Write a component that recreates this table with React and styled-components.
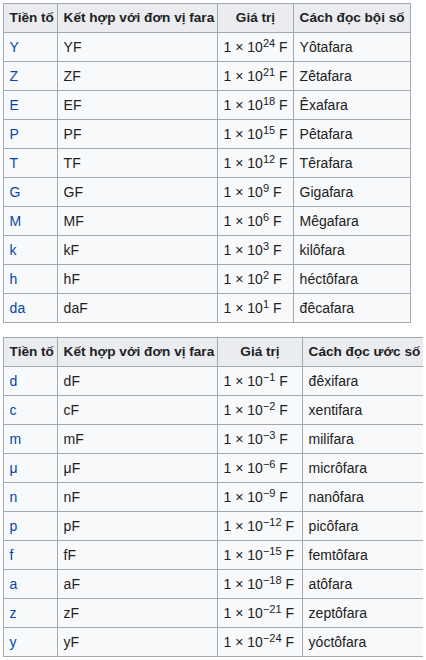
import React from "react"
import styled, { createGlobalStyle } from "styled-components"

const GlobalStyle = createGlobalStyle`
  body {
    margin: 3px;
    background: #ffffff;
    font-family: "Liberation Sans", Arial, sans-serif;
    font-size: 14px;
    color: #202122;
  }
`

const Table = styled.table`
  border-collapse: collapse;
  background: #f8f9fa;
  border: 1px solid #a2a9b1;
  color: #202122;
  font-family: "Liberation Sans", Arial, sans-serif;
  font-size: 14px;
  margin-bottom: 14px;
  table-layout: fixed;
  width: ${(p) => p.$width}px;
`

const Th = styled.th`
  box-sizing: border-box;
  background: #eaecf0;
  border: 1px solid #a2a9b1;
  padding: 2.8px 5.6px;
  line-height: 22.4px;
  font-size: 13.6px;
  text-align: center;
  font-weight: bold;
  white-space: nowrap;
  width: ${(p) => p.$w}px;
`

const Td = styled.td`
  border: 1px solid #a2a9b1;
  padding: 2.8px 5.6px;
  line-height: 22.4px;
  text-align: left;
  white-space: nowrap;
`

const PrefixLink = styled.a`
  color: #0645ad;
  text-decoration: none;
`

const Sup = styled.sup`
  font-size: 11px;
  line-height: 1;
  vertical-align: 5px;
`

const big = [
  ["Y", "24", "Yôtafara"],
  ["Z", "21", "Zêtafara"],
  ["E", "18", "Êxafara"],
  ["P", "15", "Pêtafara"],
  ["T", "12", "Têrafara"],
  ["G", "9", "Gigafara"],
  ["M", "6", "Mêgafara"],
  ["k", "3", "kilôfara"],
  ["h", "2", "héctôfara"],
  ["da", "1", "đêcafara"],
]

const small = [
  ["d", "−1", "đêxifara"],
  ["c", "−2", "xentifara"],
  ["m", "−3", "milifara"],
  ["μ", "−6", "micrôfara"],
  ["n", "−9", "nanôfara"],
  ["p", "−12", "picôfara"],
  ["f", "−15", "femtôfara"],
  ["a", "−18", "atôfara"],
  ["z", "−21", "zeptôfara"],
  ["y", "−24", "yóctôfara"],
]

const PrefixTable = ({ rows, title, widths, total }) => (
  <Table $width={total}>
    <thead>
      <tr>
        <Th $w={widths[0]}>Tiền tố</Th>
        <Th $w={widths[1]}>Kết hợp với đơn vị fara</Th>
        <Th $w={widths[2]}>Giá trị</Th>
        <Th $w={widths[3]}>{title}</Th>
      </tr>
    </thead>
    <tbody>
      {rows.map(([sym, exp, name]) => (
        <tr key={sym}>
          <Td>
            <PrefixLink href="#">{sym}</PrefixLink>
          </Td>
          <Td>{sym}F</Td>
          <Td>
            1 × 10<Sup>{exp}</Sup> F
          </Td>
          <Td>{name}</Td>
        </tr>
      ))}
    </tbody>
  </Table>
)

export default function App() {
  return (
    <>
      <GlobalStyle />
      <PrefixTable
        rows={big}
        title="Cách đọc bội số"
        widths={[54, 160, 76, 117]}
        total={407}
      />
      <PrefixTable
        rows={small}
        title="Cách đọc ước số"
        widths={[54, 160, 85, 121]}
        total={420}
      />
    </>
  )
}
